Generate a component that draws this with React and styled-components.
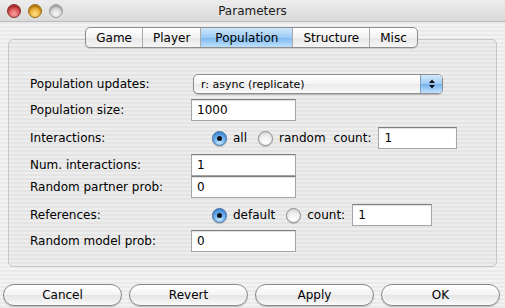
import React from "react";
import { styled, createGlobalStyle } from "styled-components";

const GlobalStyle = createGlobalStyle`
  html, body {
    margin: 0;
    padding: 0;
    background: #ececec;
  }
  body {
    font-family: "DejaVu Sans", "Liberation Sans", sans-serif;
    font-size: 12px;
    color: #000;
  }
`;

const pinstripe = `repeating-linear-gradient(to bottom, #f3f3f3 0px, #f3f3f3 2px, #eaeaea 2px, #eaeaea 4px)`;

function Radio({ checked }) {
  return <RadioDot $checked={checked} />;
}

function App() {
  const tabs = ["Game", "Player", "Population", "Structure", "Misc"];
  return (
    <>
      <GlobalStyle />
      <Window>
        <TitleBar>
          <Lights>
            <Light $c1="#f7a3a3" $c2="#d0383a" $ring="#8e2a2a" />
            <Light $c1="#fde08a" $c2="#e49a18" $ring="#9a6a14" />
            <Light $c1="#f4f4f4" $c2="#cfcfcf" $ring="#9d9d9d" />
          </Lights>
          <Title>Parameters</Title>
        </TitleBar>

        <Body>
          <TabBar>
            {tabs.map((t) => (
              <Tab key={t} $active={t === "Population"}>
                {t}
              </Tab>
            ))}
          </TabBar>

          <GroupBox>
            <Row $gap={33}>
              <Label>Population updates:</Label>
              <Popup>
                <PopupText>r: async (replicate)</PopupText>
                <PopupArrows>
                  <svg width="8" height="12" viewBox="0 0 8 12">
                    <path d="M4 1.5 L7 5 L1 5 Z" fill="#111" />
                    <path d="M4 10.5 L7 7 L1 7 Z" fill="#111" />
                  </svg>
                </PopupArrows>
              </Popup>
            </Row>
            <Row $gap={4}>
              <Label>Population size:</Label>
              <Field $w={105}>1000</Field>
            </Row>
            <Row $gap={6}>
              <Label>Interactions:</Label>
              <Choices>
                <Choice $after={11}>
                  <Radio checked />
                  <span>all</span>
                </Choice>
                <Choice $after={8}>
                  <Radio />
                  <span>random</span>
                </Choice>
                <CountLabel>count:</CountLabel>
                <Field $w={79}>1</Field>
              </Choices>
            </Row>
            <Row $gap={5}>
              <Label>Num. interactions:</Label>
              <Field $w={105}>1</Field>
            </Row>
            <Row $gap={0}>
              <Label>Random partner prob:</Label>
              <Field $w={105}>0</Field>
            </Row>
            <Row $gap={6}>
              <Label>References:</Label>
              <Choices>
                <Choice $after={11}>
                  <Radio checked />
                  <span>default</span>
                </Choice>
                <Choice $after={7}>
                  <Radio />
                  <span>count:</span>
                </Choice>
                <Field $w={80}>1</Field>
              </Choices>
            </Row>
            <Row $gap={4}>
              <Label>Random model prob:</Label>
              <Field $w={105}>0</Field>
            </Row>
          </GroupBox>

          <Buttons>
            <Button>Cancel</Button>
            <Button>Revert</Button>
            <Button>Apply</Button>
            <Button>OK</Button>
          </Buttons>
        </Body>
      </Window>
    </>
  );
}

export default App;

const Window = styled.div`
  width: 505px;
  height: 308px;
  overflow: hidden;
  display: flex;
  flex-direction: column;
  background: ${pinstripe};
`;

const TitleBar = styled.div`
  position: relative;
  height: 22px;
  flex: none;
  display: flex;
  align-items: center;
  justify-content: center;
  background: linear-gradient(to bottom, #ededed, #dadada);
  border-bottom: 1px solid #bcbcbc;
  box-sizing: border-box;
`;

const Lights = styled.div`
  position: absolute;
  left: 7px;
  top: 4px;
  display: flex;
  gap: 7px;
`;

const Light = styled.div`
  width: 14px;
  height: 14px;
  border-radius: 50%;
  box-sizing: border-box;
  border: 1px solid ${(p) => p.$ring};
  background: radial-gradient(circle at 50% 75%, ${(p) => p.$c1} 0%, ${(p) => p.$c2} 70%);
  box-shadow: inset 0 2px 2px rgba(0, 0, 0, 0.25);
`;

const Title = styled.div`
  font-size: 12px;
  color: #1a1a1a;
  margin-top: 1px;
`;

const Body = styled.div`
  display: flex;
  flex-direction: column;
  padding-top: 5px;
`;

const TabBar = styled.div`
  align-self: center;
  margin-left: -2px;
  display: flex;
  height: 21px;
  border: 1px solid #8d8d8d;
  border-radius: 5px;
  box-sizing: border-box;
  overflow: hidden;
  position: relative;
  z-index: 1;
  background: linear-gradient(to bottom, #ffffff, #f2f2f2 50%, #e6e6e6 51%, #f6f6f6);
  box-shadow: 0 1px 1px rgba(0, 0, 0, 0.15);
`;

const Tab = styled.div`
  display: flex;
  align-items: center;
  justify-content: center;
  padding: 0 ${(p) => (p.$active ? 14 : 10)}px;
  font-size: 12px;
  border-left: 1px solid #a9a9a9;
  &:first-child {
    border-left: none;
  }
  background: ${(p) =>
    p.$active
      ? "linear-gradient(to bottom, #cfe6fb, #9ccbf5 50%, #7bb8f0 51%, #bde0fd)"
      : "transparent"};
  color: #000;
`;

const GroupBox = styled.div`
  margin: -9px 8px 0 8px;
  height: 228px;
  box-sizing: border-box;
  border: 1px solid #c6c6c6;
  border-radius: 5px;
  background: rgba(0, 0, 0, 0.025);
  display: flex;
  flex-direction: column;
  padding-left: 21px;
`;

const Row = styled.div`
  display: flex;
  align-items: center;
  height: 22px;
  margin-top: ${(p) => p.$gap}px;
`;

const Label = styled.div`
  width: 161px;
  flex: none;
  font-size: 12px;
`;

const Field = styled.div`
  width: ${(p) => p.$w}px;
  height: 22px;
  box-sizing: border-box;
  background: #fff;
  border: 1px solid #a5a5a5;
  border-top-color: #7c7c7c;
  box-shadow: inset 0 1px 1px rgba(0, 0, 0, 0.12);
  padding-left: 5px;
  display: flex;
  align-items: center;
  font-size: 12px;
`;

const Popup = styled.div`
  margin-left: 2px;
  width: 250px;
  height: 20px;
  box-sizing: border-box;
  display: flex;
  border: 1px solid #8e8e8e;
  border-radius: 5px;
  overflow: hidden;
  background: linear-gradient(to bottom, #ffffff, #f4f4f4 50%, #e9e9e9 51%, #fafafa);
  box-shadow: 0 1px 1px rgba(0, 0, 0, 0.2);
`;

const PopupText = styled.div`
  flex: 1;
  display: flex;
  align-items: center;
  padding-left: 7px;
  font-size: 11px;
`;

const PopupArrows = styled.div`
  width: 21px;
  display: flex;
  align-items: center;
  justify-content: center;
  border-left: 1px solid #7a9ec4;
  background: linear-gradient(to bottom, #d3e9fc, #9ccbf5 50%, #74b2ee 51%, #c3e3fe);
`;

const Choices = styled.div`
  display: flex;
  align-items: center;
  padding-left: 21px;
  font-size: 12px;
`;

const Choice = styled.div`
  display: flex;
  align-items: center;
  gap: 6px;
  margin-right: ${(p) => p.$after}px;
`;

const CountLabel = styled.span`
  margin-right: 7px;
`;

const RadioDot = styled.span`
  width: 15px;
  height: 15px;
  border-radius: 50%;
  box-sizing: border-box;
  display: inline-flex;
  align-items: center;
  justify-content: center;
  border: 1px solid ${(p) => (p.$checked ? "#3e6ea3" : "#8d8d8d")};
  background: ${(p) =>
    p.$checked
      ? "radial-gradient(circle at 50% 80%, #c6e6ff 0%, #6fb0ee 45%, #2d6fc4 100%)"
      : "radial-gradient(circle at 50% 80%, #ffffff 0%, #f0f0f0 50%, #c9c9c9 100%)"};
  box-shadow: 0 1px 1px rgba(0, 0, 0, 0.2);
  &::after {
    content: "";
    display: ${(p) => (p.$checked ? "block" : "none")};
    width: 5px;
    height: 5px;
    border-radius: 50%;
    background: #111;
  }
`;

const Buttons = styled.div`
  margin-top: 17px;
  padding: 0 3px;
  display: flex;
  gap: 7px;
`;

const Button = styled.div`
  width: 119px;
  height: 22px;
  box-sizing: border-box;
  border: 1px solid #8a8a8a;
  border-radius: 11px;
  display: flex;
  align-items: center;
  justify-content: center;
  font-size: 12px;
  background: linear-gradient(to bottom, #ffffff, #f3f3f3 50%, #e4e4e4 51%, #fafafa);
  box-shadow: 0 1px 1px rgba(0, 0, 0, 0.2);
`;
